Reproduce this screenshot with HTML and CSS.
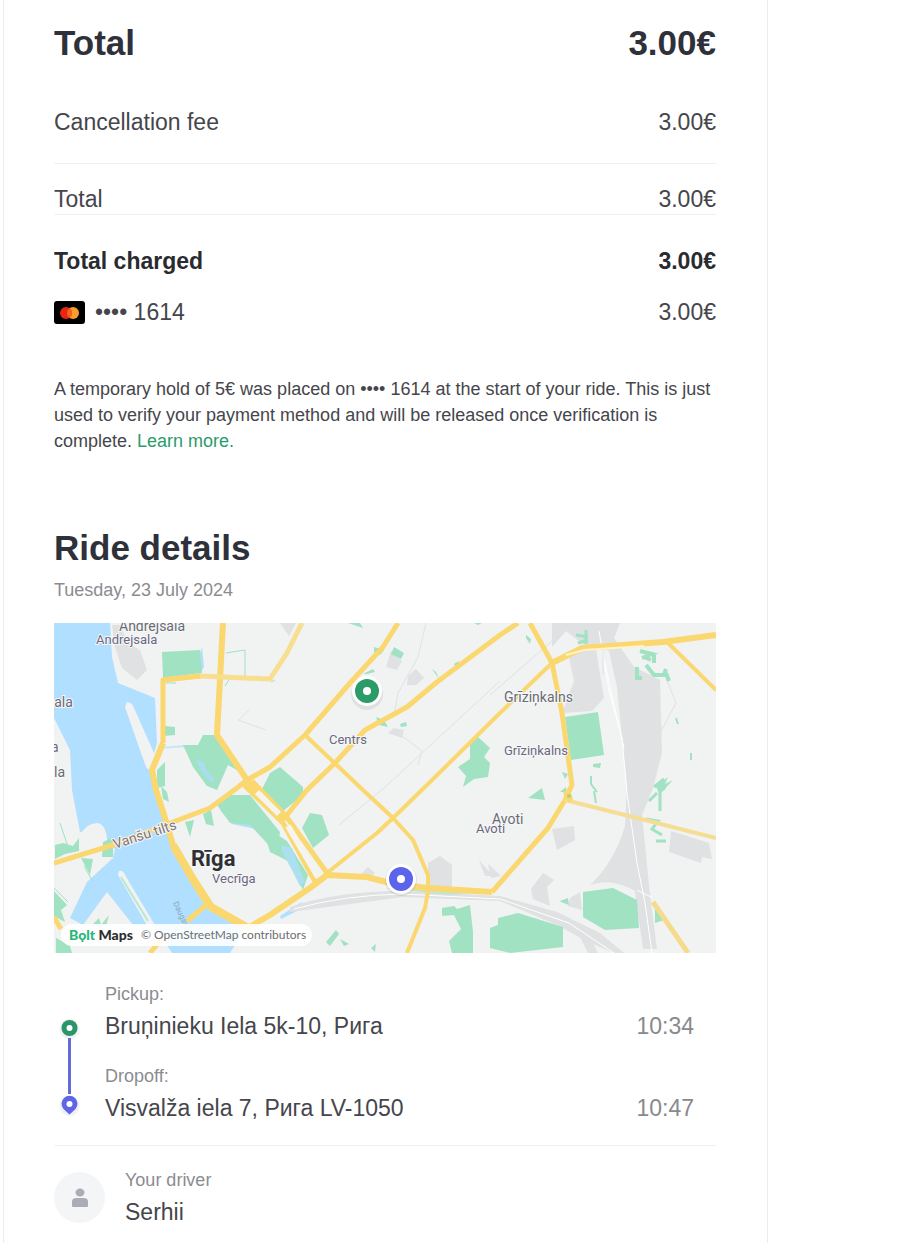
FILE: index.html
```html
<!DOCTYPE html>
<html lang="en">
<head>
    <meta charset="UTF-8">
    <meta name="viewport" content="width=device-width, initial-scale=1.0">
    <title>Ride receipt</title>
    <link rel="stylesheet" href="styles.css">
</head>
<body>
    <main class="receipt">
        <section class="fare">
            <h1 class="title title-row"><span>Total</span><span>3.00€</span></h1>
            <dl class="fare-list">
                <div class="fare-row fare-fee"><dt>Cancellation fee</dt><dd>3.00€</dd></div>
                <div class="fare-row fare-total"><dt>Total</dt><dd>3.00€</dd></div>
                <div class="fare-row fare-charged"><dt>Total charged</dt><dd>3.00€</dd></div>
                <div class="fare-row">
                    <dt class="card-label">
                        <svg class="card-icon" viewBox="0 0 31 23" aria-hidden="true">
                            <rect width="31" height="23" rx="3" fill="#000"/>
                            <circle cx="19" cy="12" r="6" fill="#f79e2b"/>
                            <circle cx="12" cy="12" r="6" fill="#e8260f"/>
                            <path d="M15.500 7.100a6 6 0 0 1 0 9.800a6 6 0 0 1 0-9.800z" fill="#f26322"/>
                        </svg>
                        <span>•••• 1614</span>
                    </dt>
                    <dd>3.00€</dd>
                </div>
            </dl>
            <p class="note">A temporary hold of 5€ was placed on •••• 1614 at the start of your ride. This is just used to verify your payment method and will be released once verification is complete. <a href="#">Learn more.</a></p>
        </section>

        <section class="ride">
            <h2 class="title">Ride details</h2>
            <p class="small">Tuesday, 23 July 2024</p>

            <div class="map">
                <svg class="map-canvas" viewBox="0 0 662 330" role="img" aria-label="Rīga">
                    <rect width="662" height="330" fill="#f1f2f2"/>

                    <!-- water -->
                    <g fill="#b1dfff">
                        <path d="M0 0H56L58 34L64 60L101 75L103 120L98 144L102 167L111 195L119 222L153 279L190 307L176 330H118L100 302L79 302L53 269L29 302L16 295L33 259L59 235L46 207L26 209L18 167L16 127L0 95Z"/>
                        <path d="M146 30l2-6 2 20-5 8zM172 183l12 12 18 6-1 5-23-5-12-14z"/>
                        <path d="M226 293l22-14-3 8-18 9z"/>
                    </g>
                    <path d="M104 125l30-2" stroke="#c5e6fb" stroke-width="2"/>

                    <!-- land over the river -->
                    <g fill="#f1f2f2">
                        <path d="M73 79q5 0 7 6L100 130L104 118V140L98 150L92 144L87 130L71 84Z"/>
                        <path d="M26 212q6-12 18-12q8 2 9 16l8 10-2 9-19 5z"/>
                        <path d="M65 248q4-1 6 4L102 304H94L64 252Z"/>
                    </g>

                    <!-- built-up areas and rail yards -->
                    <g fill="#dfe1e2">
                        <path d="M58 2h8l8 18 12 7 7 20-10 10-15-12-7-21z"/>
                        <path d="M498 0H566L560 15L580 44L606 57L608 130L599 165L588 192L596 272L603 326H589L580 262L571 203L573 165L563 64L555 28L541 21L550 75L538 88L508 90L520 58L514 30L530 22L512 8L498 24Z"/>
                        <path d="M571 203L583 269Q558 254 536 262Q560 240 571 203Z"/>
                        <path d="M498 206l22-3 1 14-18 10zM489 250l-12 16 2 10 17 7-3-19 7-7zM617 208l38 12 3 16-10-2-1 6-32-11z"/>
                        <path d="M354 53l8-7 8 9-8 7h-9zM337 28l11 10-5 9-11-3zM340 105l10 2-2 8-14-5zM374 240l12-7 12 9v24h-24zM314 244l7 6-7 6-6-6zM425 237l14 16h-8zM434 241l13 12-10 2zM226 0h16l-7 13z"/>
                        <path d="M236 284Q283 268 349 268L446 273L503 289L546 310L570 330H560L534 319L503 302L446 278L349 274L236 289Z"/>
                        <path d="M534 311l10 19h-10l-10-20zM516 275l10-6 2 18-14-4z"/>
                    </g>
                    <g fill="none" stroke="#fff" stroke-width="1">
                        <path d="M545 8L555 68L568 115L573 170L583 240L591 280L598 330"/>
                        <path d="M551 40L560 82L570 125"/>
                        <path d="M240 286Q290 272 349 271L446 276L515 300L560 330M583 267L599 275"/>
                    </g>
                    <g fill="none" stroke="#dfe1e2" stroke-width="1">
                        <path d="M372 0L364 34L344 70L340 93M446 58L330 165L285 202M498 18L436 72M344 110L368 128L364 142M185 97l10-10M184 97l28 10M542 10V50M549 12V52M610 50L622 80L606 110"/>
                    </g>

                    <!-- parks -->
                    <g fill="#a1e2c2">
                        <path d="M108 29L146 27L148 50L109 55Z"/>
                        <path d="M129 122L144 122L149 112L161 112L188 150L174 142L163 167L153 163L139 144Z"/>
                        <path d="M163 182L174 172L196 172L226 209L223 231L196 202L176 200Z"/>
                        <path d="M216 150L226 144L249 164V172L229 188L208 166Z"/>
                        <path d="M208 202L233 218L254 252L249 267L236 239L216 229Z"/>
                        <path d="M248 205L256 190L268 192L275 212L259 225Z"/>
                        <path d="M511 94L544 89L550 132L517 137Z"/>
                        <path d="M416 117L424 114L436 125L430 134L436 140L434 154L420 156L409 164L412 153L404 144L416 136Z"/>
                        <path d="M388 285L400 283L403 286L416 282L419 309V330H398L395 318L407 306L400 292L388 293Z"/>
                        <path d="M436 305L444 302V295L464 290L509 304V324L456 330L436 325Z"/>
                        <path d="M529 269L559 265L583 277L585 305L551 307L529 294Z"/>
                        <path d="M103 147l8-8v24l-8 2zM111 103l10 1v8l-11 1zM1 222l8-2 10 3 6-8v13l-14 3-10 5zM27 235l12 1-3 16zM0 268l13 14-6 5 4 12-11-6zM38 302l7-7 3 10zM47 302l8-10-3 11zM49 219l10-5v20h-11zM2 315l14 8 2 7H2z"/>
                        <path d="M131 199l9-2-4 17zM149 191l8-4 3 16-8-2zM107 163l6 6 2 10-6-3z"/>
                        <path d="M272 319l10-12 3 4-9 12zM286 316l9 5-5 2zM317 325l5-4-1 8zM474 175l14-10 3 12zM601 280l9 17-9 3z"/>
                        <path d="M294 0h12l3 5zM420 0h8l-4 2zM340 24l10 6-3 6-10-5zM320 24l10 3-4 5-6-3zM322 94l8 3 4 7-9-2zM346 101l6-2 1 4-6 1zM309 51l10-5 2 3-8 2zM378 46l4 3 3 7zM400 41l5-3-2 8z"/>
                        <path d="M539 141l8-1-1 5-7-1zM508 149l6 2-3 5zM506 169l6-5v5zM506 278l8-3 1 7-8-3zM602 164l12-10-3 7 8-4-13 14zM472 12l5 4-1 5-4-6z"/>
                    </g>
                    <path d="M67 254L94 298" stroke="#b9e8d2" stroke-width="2"/>
                    <path d="M330 265L395 266L420 270L395 272Z" fill="#c2e5cf"/>
                    <g fill="none" stroke="#a1e2c2" stroke-width="3">
                        <path d="M522 12l12 2M532 7v14M524 20l10-3"/>
                        <path d="M586 28l12 3-10 4M583 44v11h5M592 42l8 10h10l2-6M600 40v-8M612 50l3 8M590 34l7 3" stroke-width="4"/>
                        <path d="M600 164l10-8M603 170l-8 8M592 196l12 2-6 8 10 6M602 218h10M606 188v-20l5-3"/>
                        <path d="M537 153v8l6 8M540 168l2 12M622 95l2 6M637 130v7" stroke-width="2"/>
                        <path d="M172 30l19-3v26M176 55l-5 8M112 60h10M217 59l4-2" stroke-width="1"/>
                        <path d="M30 243l8 14M6 200l8 24M0 265l14 14" stroke-width="1"/>
                    </g>
                    <path d="M228 222l10 3 8 22 5 12-5 4-8-16-10-18z" fill="#acdff0"/>
                    <path d="M142 136l8 3 2 8 8 8-1 6-10-10-5-9z" fill="#a8def0"/>

                    <!-- roads -->
                    <g fill="none" stroke="#fad76f" stroke-linejoin="round">
                        <path stroke-width="6" d="M169 0L163 112L193 157L229 197"/>
                        <path stroke-width="5" d="M109 57L146 53L216 56L233 30L248 0" stroke="#f8df90"/>
                        <path stroke-width="6" d="M109 120L98 147L102 167L111 195L119 222"/>
                        <path stroke-width="5" d="M109 120V57L146 53"/>
                        <path stroke-width="8" d="M119 222L140 258L157 284L196 306"/>
                        <path stroke-width="5" d="M344 0L329 24L296 60L251 112L216 144L193 157L183 165L156 185L119 199L59 222L0 240"/>
                        <path stroke-width="5" d="M464 0L446 12L383 59L353 84L311 107L281 140L253 167L229 197"/>
                        <path stroke-width="4" d="M251 112L309 167L339 195L359 217L374 252V268L371 285L353 330"/>
                        <path stroke-width="5" d="M476 0L498 40L508 90L518 162L511 177L494 205L438 269"/>
                        <path stroke-width="4" d="M498 40L446 90L373 162L339 195L323 210L273 250"/>
                        <path stroke-width="6" d="M498 40L528 25L609 19L662 12"/>
                        <path stroke-width="4" d="M613 19L662 67"/>
                        <path stroke-width="6" d="M438 269L373 265L336 260L313 254L273 252L256 265L216 292L192 306"/>
                        <path stroke-width="5" d="M188 160L229 200L263 262M198 158L232 193L273 250"/>
                        <path stroke-width="4" d="M511 177L587 196L662 215" stroke="#f6dd94"/>
                        <path stroke-width="5" d="M599 279L634 330" stroke="#f5dc8d"/>
                        <path stroke-width="5" d="M156 279L133 298M110 313L96 330M0 294l7 12"/>
                    </g>
                    <path d="M509 170l6-6 4 12-4 4z" fill="#fad76f"/>
                    <circle cx="515" cy="173" r="2" fill="#a8d87c"/>
                    <path d="M512 32L530 27L590 23" fill="none" stroke="#fff3c7" stroke-width="2"/>
                    <path d="M203 169L225 191M234 203L264 254" stroke="#f6f4ef" stroke-width="6"/>

                    <!-- place names -->
                    <g class="map-text">
                        <text x="65" y="8">Andrejsala</text>
                        <text x="42" y="21" class="map-area">Andrejsala</text>
                        <text x="-7" y="84">sala</text>
                        <text x="-3" y="129">a</text>
                        <text x="0" y="154">la</text>
                        <text x="275" y="121" class="map-area">Centrs</text>
                        <text x="450" y="79">Grīziņkalns</text>
                        <text x="450" y="132" class="map-area">Grīziņkalns</text>
                        <text x="438" y="201">Avoti</text>
                        <text x="422" y="210" class="map-area">Avoti</text>
                        <text x="158" y="260" class="map-area">Vecrīga</text>
                        <text x="137" y="243" class="map-city">Rīga</text>
                        <text transform="translate(61 226) rotate(-18)" fill="#81746f">Vanšu tilts</text>
                        <text transform="translate(119 280) rotate(65)" class="map-river">Daugava</text>
                    </g>

                    <!-- pickup and dropoff -->
                    <g>
                        <circle cx="313" cy="71" r="16" fill="#000" opacity=".07"/>
                        <circle cx="313" cy="68" r="15" fill="#fff"/>
                        <circle cx="313" cy="68" r="12" fill="#2b9c68"/>
                        <circle cx="313" cy="68" r="4" fill="#fff"/>
                        <circle cx="347" cy="257" r="16" fill="#000" opacity=".07"/>
                        <circle cx="347" cy="256" r="15" fill="#fff"/>
                        <circle cx="347" cy="256" r="12" fill="#5c64ec"/>
                        <circle cx="347" cy="256" r="4" fill="#fff"/>
                    </g>
                </svg>
                <div class="map-credit">
                    <span class="map-brand"><span class="brand-green">Bọlt</span> Maps</span>
                    <span>© OpenStreetMap contributors</span>
                </div>
            </div>

            <div class="route">
                <svg class="route-line" viewBox="0 0 31 107" aria-hidden="true">
                    <circle cx="15.500" cy="13" r="10" fill="#eef3f2"/>
                    <circle cx="15.500" cy="12" r="8" fill="#2b9469"/>
                    <circle cx="15.500" cy="12" r="3" fill="#fff"/>
                    <rect x="14" y="22" width="3" height="56" fill="#626bd8"/>
                    <circle cx="15.500" cy="90" r="10" fill="#f0f1f7"/>
                    <path d="M15.500 98.500L9.500 93A8 8 0 1 1 21.500 93Z" fill="#6065e8"/>
                    <circle cx="15.500" cy="88" r="3" fill="#fff"/>
                </svg>
                <div class="stops">
                    <div class="stop">
                        <div>
                            <p class="small">Pickup:</p>
                            <p class="value">Bruņinieku Iela 5k-10, Рига</p>
                        </div>
                        <time>10:34</time>
                    </div>
                    <div class="stop">
                        <div>
                            <p class="small">Dropoff:</p>
                            <p class="value">Visvalža iela 7, Рига LV-1050</p>
                        </div>
                        <time>10:47</time>
                    </div>
                </div>
            </div>
        </section>

        <section class="driver">
            <svg class="avatar" viewBox="0 0 51 51" aria-hidden="true">
                <circle cx="25.500" cy="25.500" r="25.500" fill="#f4f5f7"/>
                <ellipse cx="26" cy="20.500" rx="4.500" ry="4" fill="#acacb9"/>
                <path d="M18 34v-4q0-4 4-4h8q4 0 4 4v4q0 1-1 1H19q-1 0-1-1z" fill="#acacb9"/>
            </svg>
            <div>
                <p class="small">Your driver</p>
                <p class="value">Serhii</p>
            </div>
        </section>
    </main>
</body>
</html>
```
FILE: styles.css
```css
* {
    margin: 0;
    padding: 0;
    box-sizing: border-box;
}

body {
    background: #fff;
    color: #45464b;
    font-family: "Liberation Sans", Arial, sans-serif;
    font-size: 23px;
    line-height: 30px;
}

.receipt {
    max-width: 765px;
    min-height: 100vh;
    margin-left: 3px;
    padding: 22px 51px 12px 50px;
    border-left: 1px solid #ebecee;
    border-right: 1px solid #ebecee;
}

.title {
    color: #2f313a;
    font-size: 35px;
    line-height: 42px;
}

.title-row,
.fare-row,
.stop {
    display: flex;
    justify-content: space-between;
}

/* fare */
.fare-list {
    margin-top: 43px;
}

.fare-fee {
    padding-bottom: 26px;
    margin-bottom: 20px;
    border-bottom: 1px solid #eef0f1;
}

.fare-total {
    margin-bottom: 31px;
    border-bottom: 1px solid #eef0f1;
}

.fare-charged {
    margin-bottom: 21px;
    color: #2a2b2f;
    font-weight: bold;
}

.card-label {
    display: flex;
    align-items: center;
    gap: 10px;
}

.card-icon {
    width: 31px;
    height: 23px;
}

.note {
    margin-top: 49px;
    font-size: 18px;
    line-height: 26px;
}

.note a {
    color: #2a9c6b;
    text-decoration: none;
}

/* ride */
.ride {
    margin-top: 73px;
    padding-bottom: 22px;
    border-bottom: 1px solid #eef0f1;
}

.small {
    margin-bottom: 4px;
    color: #8b8c91;
    font-size: 18px;
    line-height: 26px;
}

.title + .small {
    margin-top: 8px;
}

.map {
    position: relative;
    margin-top: 20px;
}

.map-canvas {
    display: block;
    width: 100%;
}

.map-text {
    fill: #696c73;
    font-family: Roboto, sans-serif;
    font-size: 14px;
    stroke: #f6f7f8;
    stroke-width: 2px;
    paint-order: stroke;
}

.map-area {
    fill: #6c6880;
    font-size: 13px;
}

.map-city {
    fill: #2e3034;
    font-size: 22px;
    font-weight: 700;
}

.map-river {
    fill: #8ba8bb;
    font-size: 8px;
    stroke: none;
}

.map-credit {
    position: absolute;
    left: 7px;
    bottom: 7px;
    display: flex;
    align-items: center;
    gap: 8px;
    padding: 0 6px 0 8px;
    border-radius: 11px;
    background: rgba(255, 255, 255, 0.9);
    color: #6d6f72;
    font-family: Lato, sans-serif;
    font-size: 12px;
    line-height: 22px;
}

.map-brand {
    color: #2c2e31;
    font-size: 14px;
    font-weight: 900;
}

.brand-green {
    color: #26b778;
}

.route {
    display: flex;
    align-items: flex-end;
    gap: 20px;
    margin-top: 28px;
    padding-right: 22px;
}

.route-line {
    flex: none;
    width: 31px;
    height: 107px;
}

.stops {
    flex: 1;
    display: grid;
    gap: 22px;
}

.stop {
    align-items: flex-end;
}

.stop time {
    color: #88898e;
}

/* driver */
.driver {
    display: flex;
    align-items: center;
    gap: 20px;
    margin-top: 21px;
}

.avatar {
    width: 51px;
    height: 51px;
}
```
